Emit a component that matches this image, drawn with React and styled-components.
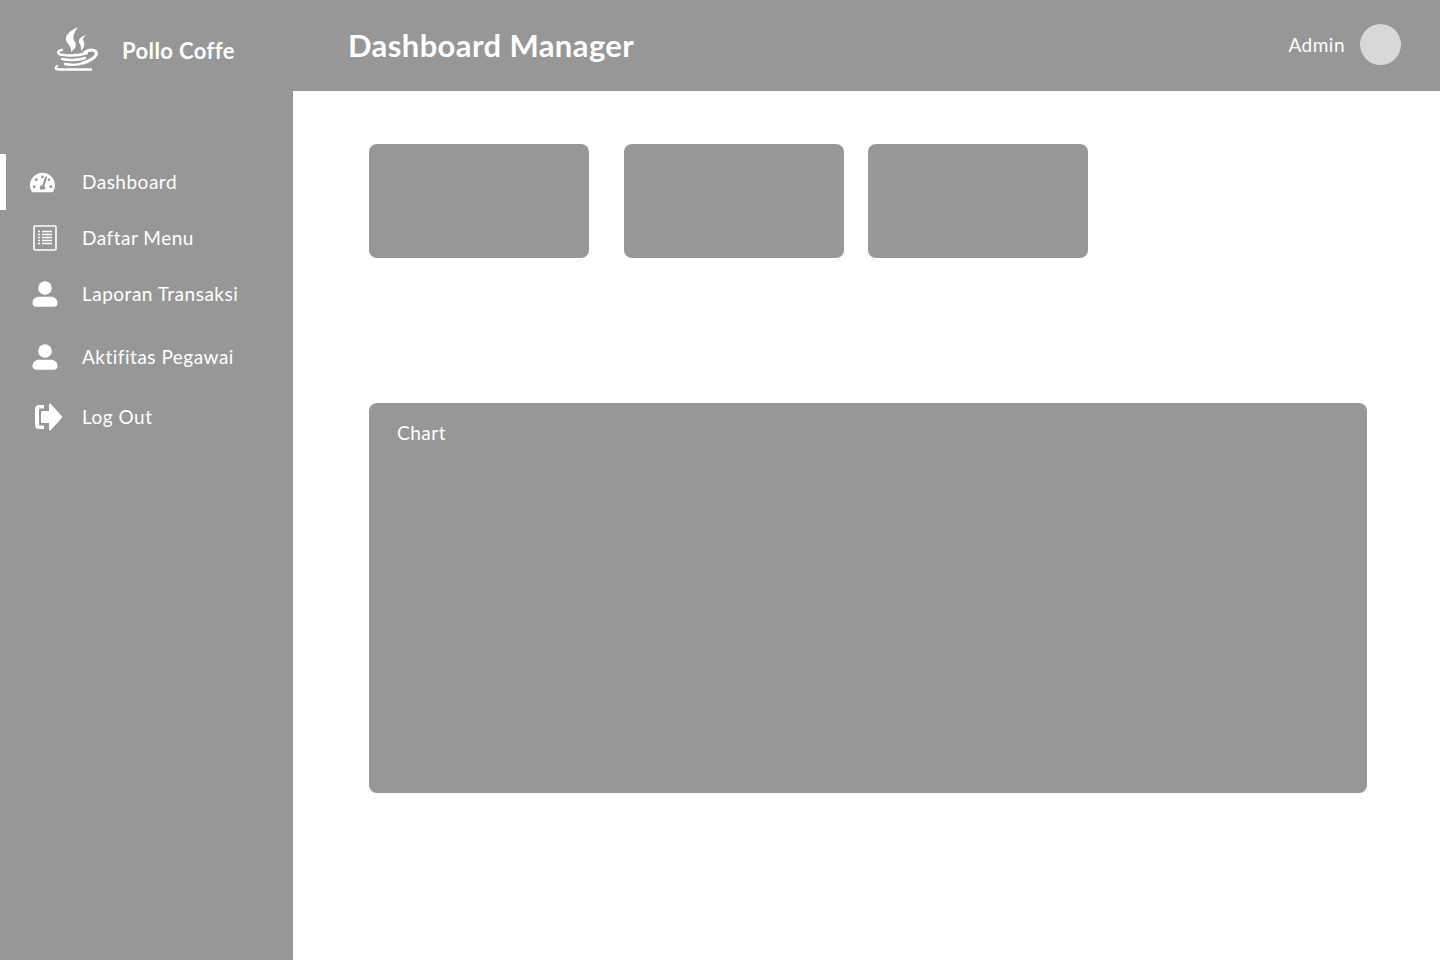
import styled, { createGlobalStyle } from "styled-components";
import { FaTachometerAlt } from "react-icons/fa";

const GlobalStyle = createGlobalStyle`
  html, body {
    margin: 0;
    padding: 0;
    background: #fff;
    font-family: "Lato", "Noto Sans", sans-serif;
    letter-spacing: 0.5px;
  }
  * { box-sizing: border-box; }
`;

const MENU = [
  { label: "Dashboard", icon: "gauge", shift: -2, active: true },
  { label: "Daftar Menu", icon: "list", shift: 1 },
  { label: "Laporan Transaksi", icon: "person", shift: 1 },
  { label: "Aktifitas Pegawai", icon: "person", shift: 1, gap: 7 },
  { label: "Log Out", icon: "logout", shift: 4, gap: 4 },
];

const CoffeeLogo = () => (
  <svg width="44" height="44" viewBox="0 0 44 44" fill="none" stroke="#fff" strokeLinecap="round">
    <path fill="#fff" stroke="none" d="M24 0C17 3 11 8 12 13c1 4 6 6 5 12 4-3 6-6 4-10-3-4-2-8 3-15z" />
    <path fill="#fff" stroke="none" d="M33 8c-5 1-9 4-8 7 1 3 3 5 2 9 3-3 4-6 3-9-2-3-1-5 3-7z" />
    <path d="M8 23c-6 1-5 5 2 5 7 1 17 0 23-2" strokeWidth="2.400" />
    <path d="M8 32c6 1.500 16 1.500 23-1" strokeWidth="2.400" />
    <path d="M11 37c5 1 13 1 18-1" strokeWidth="2.400" />
    <path d="M31 25c7-4 13-1 11 3-2 4-7 6-13 8" strokeWidth="3" />
    <path d="M3 39c-3 3-1 3.500 5 3.500h29" strokeWidth="2.400" />
  </svg>
);

const ListIcon = () => (
  <svg width="24" height="26" viewBox="0 0 24 26" fill="none" stroke="#fff">
    <rect x="1" y="1" width="22" height="24" rx="1" strokeWidth="1.600" />
    <g strokeWidth="1.300">
      <path d="M9 6.500h10M9 9.500h10M9 12.500h10M9 15.500h10M9 18.500h10" />
      <path d="M5 6.500h2M5 9.500h2M5 12.500h2M5 15.500h2M5 18.500h2" />
    </g>
  </svg>
);

const PersonIcon = () => (
  <svg width="26" height="26" viewBox="0 0 26 26" fill="#fff">
    <circle cx="13" cy="7" r="6.800" />
    <path d="M0.500 22c0-4 3-6.300 6.500-6.300h12c3.500 0 6.500 2.300 6.500 6.300 0 2.500-1.500 3.700-3.500 3.700H4c-2 0-3.500-1.200-3.500-3.700z" />
  </svg>
);

const LogoutIcon = () => (
  <svg width="28" height="28" viewBox="0 0 28 28" fill="#fff">
    <path d="M10 2H5C2.500 2 1 3.500 1 6v16c0 2.500 1.500 4 4 4h5v-3.500H6.500c-1 0-1.500-.5-1.500-1.500V7c0-1 .5-1.500 1.500-1.500H10z" />
    <path d="M15 1.500c0-1 1-1.300 1.700-.7L27.500 12.800c.8.800.8 1.700 0 2.500L16.700 27.200c-.7.600-1.700.3-1.700-.7V20H8.500C7.700 20 7 19.300 7 18.500v-9C7 8.700 7.700 8 8.500 8H15z" />
  </svg>
);

const icons = {
  gauge: <FaTachometerAlt size={25} color="#fff" />,
  list: <ListIcon />,
  person: <PersonIcon />,
  logout: <LogoutIcon />,
};

const App = () => (
  <>
    <GlobalStyle />
    <Page>
      <Header>
        <Brand>
          <CoffeeLogo />
          <BrandName>Pollo Coffe</BrandName>
        </Brand>
        <Title>Dashboard Manager</Title>
        <User>
          <UserName>Admin</UserName>
          <Avatar />
        </User>
      </Header>
      <Body>
        <Sidebar>
          {MENU.map((item) => (
            <MenuItem key={item.label} $active={item.active} $gap={item.gap}>
              <MenuIcon $shift={item.shift}>{icons[item.icon]}</MenuIcon>
              <MenuLabel>{item.label}</MenuLabel>
            </MenuItem>
          ))}
        </Sidebar>
        <Main>
          <Cards>
            <Card />
            <Card />
            <Card />
          </Cards>
          <Chart>Chart</Chart>
        </Main>
      </Body>
    </Page>
  </>
);

const Page = styled.div`
  display: flex;
  flex-direction: column;
  width: 1440px;
  height: 960px;
  overflow: hidden;
`;

const Header = styled.header`
  display: flex;
  align-items: center;
  height: 91px;
  padding: 0 39px 2px 0;
  background: #979797;
  color: #fff;
`;

const Brand = styled.div`
  display: flex;
  align-items: center;
  gap: 24px;
  width: 348px;
  padding: 8px 0 0 54px;
`;

const BrandName = styled.div`
  margin-top: 3px;
  font-size: 22px;
  font-weight: 700;
  letter-spacing: 0.4px;
`;

const Title = styled.h1`
  flex: 1;
  margin: 0;
  font-size: 31px;
  font-weight: 700;
  letter-spacing: 0.4px;
`;

const User = styled.div`
  display: flex;
  align-items: center;
  gap: 15px;
`;

const UserName = styled.div`
  font-size: 19px;
`;

const Avatar = styled.div`
  width: 41px;
  height: 41px;
  border-radius: 50%;
  background: #d8d8d8;
`;

const Body = styled.div`
  display: flex;
  flex: 1;
`;

const Sidebar = styled.nav`
  width: 293px;
  padding-top: 63px;
  background: #979797;
`;

const MenuItem = styled.div`
  display: flex;
  align-items: center;
  height: 56px;
  margin-top: ${(p) => p.$gap || 0}px;
  padding-left: ${(p) => (p.$active ? 24 : 30)}px;
  border-left: ${(p) => (p.$active ? "6px solid #fff" : "none")};
  color: #fff;
  font-size: 19px;
`;

const MenuIcon = styled.div`
  display: flex;
  justify-content: center;
  align-items: center;
  width: 28px;
  margin-right: 24px;
  transform: translateX(${(p) => p.$shift || 0}px);
`;

const MenuLabel = styled.span`
  margin-top: -2px;
`;

const Main = styled.main`
  flex: 1;
  padding: 53px 73px 0 76px;
  background: #fff;
`;

const Cards = styled.div`
  display: flex;
  gap: 24px;
  margin-bottom: 145px;
`;

const Card = styled.div`
  width: 220px;
  height: 114px;
  border-radius: 8px;
  background: #979797;
  &:first-child {
    margin-right: 11px;
  }
`;

const Chart = styled.section`
  height: 390px;
  padding: 18px 28px;
  border-radius: 8px;
  background: #979797;
  color: #fff;
  font-size: 19px;
`;

export default App;
